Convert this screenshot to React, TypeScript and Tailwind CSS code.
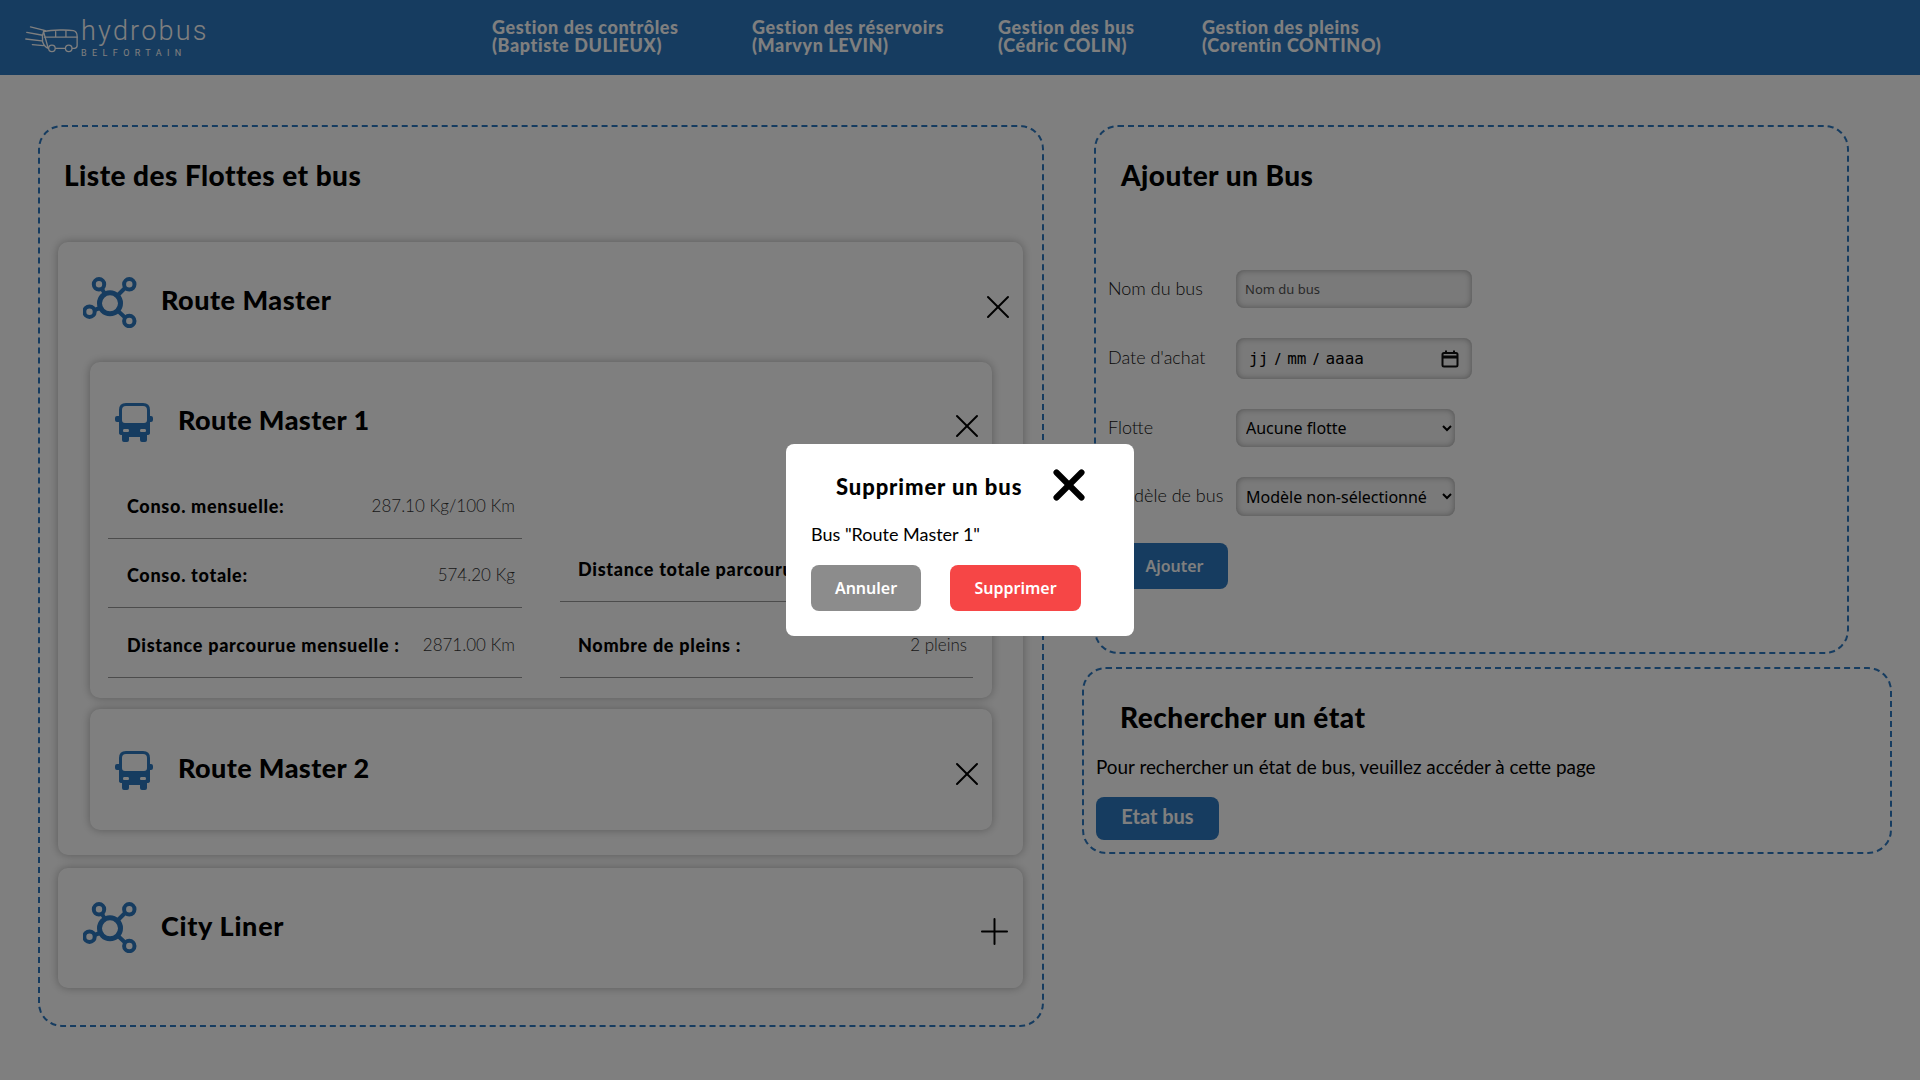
import React from 'react';
import { X, Plus } from 'lucide-react';

function NetworkIcon() {
  return (
    <svg viewBox="0 0 54 51" className="w-[54px] h-[51px] shrink-0" fill="none" stroke="#2c78c0">
      <circle cx="27" cy="26.3" r="10.5" strokeWidth="5" />
      <circle cx="16" cy="7.3" r="5.2" strokeWidth="4" />
      <circle cx="46.3" cy="7.3" r="5.2" strokeWidth="4" />
      <circle cx="6.5" cy="34.7" r="5.2" strokeWidth="4" />
      <circle cx="46.3" cy="44" r="5.2" strokeWidth="4" />
      <path d="M19 12 L22 17 M42 11 L34 19 M11.5 33 L17 31 M41.5 40 L34.5 33.5" strokeWidth="4" />
    </svg>
  );
}

function BusIcon() {
  return (
    <svg viewBox="0 0 38 39" className="w-[38px] h-[39px] shrink-0" fill="#2c78c0">
      <path
        fillRule="evenodd"
        d="M11 0 H28 Q35 0 35 7 V13 H36 Q38 13 38 15 V17 Q38 19 36 19 H35 V30 Q35 32 32 32 V37 Q32 39 30 39 H27 Q25 39 25 37 V34 H14 V37 Q14 39 12 39 H9 Q7 39 7 37 V32 Q4 32 4 30 V19 H2 Q0 19 0 17 V15 Q0 13 2 13 H4 V7 Q4 0 11 0 Z M11 3 Q7 3 7 7 V17 Q7 20 10 20 H29 Q32 20 32 17 V7 Q32 3 28 3 Z M9 26 Q8 26 8 27.5 Q8 29 9 29 H13 Q14 29 14 27.5 Q14 26 13 26 Z M26 26 Q25 26 25 27.5 Q25 29 26 29 H30 Q31 29 31 27.5 Q31 26 30 26 Z"
      />
    </svg>
  );
}

function LogoBus() {
  return (
    <svg viewBox="0 0 60 30" className="w-[56px] h-[28px] mt-[2px] shrink-0" fill="none" stroke="#ffffff" strokeWidth="1.4" strokeLinecap="round">
      <path d="M22 7 C32 5 48 5 54 6 Q58 7 58 12 V22 Q58 25 55 25 H53 M45 25 H35 M27 25 C24 24 22 21 21 18 Q20 12 22 7 Z" />
      <path d="M23 13 H58 M35 7 V13 M46 6 V13" />
      <circle cx="31" cy="25" r="3.5" />
      <circle cx="49" cy="25" r="3.5" />
      <path d="M8 2 L24 6 M4 8 L21 11 M3 15 L20 17 M10 21 L22 22" />
    </svg>
  );
}

function Stat({ label, value, className }: { label: string; value: string; className: string }) {
  return (
    <div className={`flex items-end justify-between border-b border-[#999999] pb-[20px] ${className}`}>
      <span className="text-[18px] leading-[24px] font-black tracking-[0.7px] text-black whitespace-nowrap">{label}</span>
      <span className="text-[17px] leading-[24px] font-light text-[#333333] whitespace-nowrap">{value}</span>
    </div>
  );
}

function Field({ label, children }: { label: string; children: React.ReactNode }) {
  return (
    <div className="flex items-center">
      <label className="-ml-[1px] -mt-[2px] w-[128px] shrink-0 text-[18px] font-light text-[#111111]">{label}</label>
      {children}
    </div>
  );
}

const fieldClass =
  "rounded-[8px] bg-[#f4f4f4] shadow-[inset_0_0_6px_rgba(0,0,0,0.35)] font-['Noto_Sans',sans-serif] text-black outline-none";

export default function App() {
  return (
    <div className="min-h-[1080px] bg-white font-['Lato',sans-serif]">
      <header className="flex items-center h-[75px] bg-[#2c78c0] text-white">
        <div className="w-[492px] flex items-center pl-[23px] gap-[2px]">
          <LogoBus />
          <div className="mt-[3px] font-['Roboto',sans-serif]">
            <div className="text-[27px] leading-[28px] font-light tracking-[2.2px]">hydrobus</div>
            <div className="text-[9px] leading-[16px] tracking-[5.4px]">BELFORTAIN</div>
          </div>
        </div>
        <nav className="flex -mt-[3px] text-[18px] leading-[18px] font-black tracking-[0.6px]">
          <a className="w-[260px]">Gestion des contrôles<br />(Baptiste DULIEUX)</a>
          <a className="w-[246px]">Gestion des réservoirs<br />(Marvyn LEVIN)</a>
          <a className="w-[204px]">Gestion des bus<br />(Cédric COLIN)</a>
          <a>Gestion des pleins<br />(Corentin CONTINO)</a>
        </nav>
      </header>

      <main className="flex items-start pl-[38px] pt-[50px] gap-[38px]">
        <section className="w-[1006px] h-[902px] border-2 border-dashed border-[#2c78c0] rounded-[24px] pl-[18px] pr-[19px]">
          <h2 className="h-[115px] pt-[29px] pl-[6px] text-[28px] leading-[38px] font-black tracking-[0.45px] text-black">Liste des Flottes et bus</h2>

          <div className="h-[613px] rounded-[10px] shadow-[0_0_10px_rgba(0,0,0,0.3)] bg-white">
            <div className="flex items-start h-[120px] pl-[25px] pr-[5px] pt-[35px]">
              <NetworkIcon />
              <h3 className="ml-[24px] mt-[5px] text-[27px] leading-[36px] font-black tracking-[0.5px] text-black">Route Master</h3>
              <X className="ml-auto mt-[10px] text-black" size={40} strokeWidth={1.2} />
            </div>

            <div className="ml-[32px] mr-[31px] h-[336px] rounded-[10px] shadow-[0_0_10px_rgba(0,0,0,0.3)] bg-white">
              <div className="flex items-start h-[107px] pl-[25px] pr-[5px] pt-[41px]">
                <BusIcon />
                <h3 className="ml-[25px] -mt-[1px] text-[27px] leading-[36px] font-black tracking-[0.4px] text-black">Route Master 1</h3>
                <X className="ml-auto mt-[3px] text-black" size={40} strokeWidth={1.2} />
              </div>
              <div className="grid grid-cols-[414px_413px] gap-x-[38px] pl-[18px]">
                <div className="flex flex-col">
                  <Stat label="Conso. mensuelle:" value="287.10 Kg/100 Km" className="h-[70px] pl-[19px] pr-[7px]" />
                  <Stat label="Conso. totale:" value="574.20 Kg" className="h-[69px] pl-[19px] pr-[7px]" />
                  <Stat label="Distance parcourue mensuelle :" value="2871.00 Km" className="h-[70px] pl-[19px] pr-[7px]" />
                </div>
                <div className="flex flex-col justify-end">
                  <Stat label="Distance totale parcourue :" value="5742.00 Km" className="h-[70px] pl-[18px] pr-[6px]" />
                  <Stat label="Nombre de pleins :" value="2 pleins" className="h-[76px] pl-[18px] pr-[6px]" />
                </div>
              </div>
            </div>

            <div className="ml-[32px] mr-[31px] mt-[11px] h-[121px] rounded-[10px] shadow-[0_0_10px_rgba(0,0,0,0.3)] bg-white flex items-start pl-[25px] pr-[5px] pt-[42px]">
              <BusIcon />
              <h3 className="ml-[25px] -mt-[1px] text-[27px] leading-[36px] font-black tracking-[0.4px] text-black">Route Master 2</h3>
              <X className="ml-auto mt-[3px] text-black" size={40} strokeWidth={1.2} />
            </div>
          </div>

          <div className="mt-[13px] h-[120px] rounded-[10px] shadow-[0_0_10px_rgba(0,0,0,0.3)] bg-white flex items-start pl-[25px] pr-[7px] pt-[34px]">
            <NetworkIcon />
            <h3 className="ml-[24px] mt-[6px] text-[27px] leading-[36px] font-black tracking-[0.7px] text-black">City Liner</h3>
            <Plus className="ml-auto mt-[8px] text-black" size={43} strokeWidth={1.1} />
          </div>
        </section>

        <div className="flex flex-col items-start">
          <section className="ml-[12px] w-[755px] h-[529px] border-2 border-dashed border-[#2c78c0] rounded-[24px] pl-[13px]">
            <h2 className="h-[143px] pt-[29px] pl-[12px] text-[28px] leading-[38px] font-black tracking-[0.45px] text-black">Ajouter un Bus</h2>
            <form className="flex flex-col gap-[30px] items-start">
              <Field label="Nom du bus">
                <input placeholder="Nom du bus" className={`${fieldClass} w-[236px] h-[38px] px-[9px] text-[13px] placeholder:text-[#555555]`} />
              </Field>
              <Field label="Date d'achat">
                <div className={`${fieldClass} w-[236px] h-[41px] flex items-center justify-between px-[13px]`}>
                  <span className="pt-[1px] text-[16px] flex gap-[6.5px] whitespace-nowrap">
                    <span className="font-['DejaVu_Sans_Mono',monospace]">jj</span>
                    <span>/</span>
                    <span className="font-['DejaVu_Sans_Mono',monospace]">mm</span>
                    <span>/</span>
                    <span className="font-['DejaVu_Sans_Mono',monospace]">aaaa</span>
                  </span>
                  <svg viewBox="0 0 18 18" className="w-[18px] h-[18px]" fill="none" stroke="#111111" strokeWidth="2">
                    <rect x="1.5" y="3" width="15" height="13.5" rx="1.5" />
                    <path d="M1.5 7 H16.5" strokeWidth="3" />
                    <path d="M5 0.5 V3 M13 0.5 V3" />
                  </svg>
                </div>
              </Field>
              <Field label="Flotte">
                <select className={`${fieldClass} w-[219px] h-[38px] text-[16px] pl-[6px] pr-[7px]`} defaultValue="">
                  <option value="">Aucune flotte</option>
                </select>
              </Field>
              <Field label="Modèle de bus">
                <select className={`${fieldClass} w-[219px] h-[39px] text-[16px] pl-[6px] pr-[7px]`} defaultValue="">
                  <option value="">Modèle non-sélectionné</option>
                </select>
              </Field>
              <button type="button" className="-mt-[3px] ml-[12px] w-[107px] h-[46px] rounded-[8px] bg-[#2c78c0] text-white text-[16px] font-semibold font-['Noto_Sans',sans-serif]">
                Ajouter
              </button>
            </form>
          </section>

          <section className="mt-[13px] w-[810px] h-[187px] border-2 border-dashed border-[#2c78c0] rounded-[24px] pl-[12px]">
            <h2 className="pt-[29px] pl-[24px] text-[28px] leading-[38px] font-black tracking-[0.5px] text-black">Rechercher un état</h2>
            <p className="mt-[18px] text-[18.9px] leading-[26px] text-black">Pour rechercher un état de bus, veuillez accéder à cette page</p>
            <button type="button" className="mt-[17px] w-[123px] h-[43px] pb-[6px] rounded-[8px] bg-[#2c78c0] text-white text-[20px] font-bold">
              Etat bus
            </button>
          </section>
        </div>
      </main>

      <div className="fixed inset-0 bg-black/50 flex items-center justify-center">
        <div className="w-[348px] h-[192px] rounded-[8px] bg-white px-[25px]">
          <div className="flex items-start h-[69px] pt-[21px]">
            <h2 className="ml-[25px] w-[217px] shrink-0 text-[22px] leading-[44px] font-black tracking-[0.9px] text-black">Supprimer un bus</h2>
            <X className="text-black -ml-[9.5px] -mt-[5.5px] shrink-0" size={50} strokeWidth={2.9} />
          </div>
          <p className="mt-[8px] text-[18px] leading-[26px] text-black">Bus "Route Master 1"</p>
          <div className="flex gap-[29px] mt-[18px]">
            <button type="button" className="w-[110px] h-[46px] rounded-[8px] bg-[#8c8c8c] text-white text-[16px] font-semibold font-['Noto_Sans',sans-serif]">Annuler</button>
            <button type="button" className="w-[131px] h-[46px] rounded-[8px] bg-[#f64646] text-white text-[16px] font-semibold font-['Noto_Sans',sans-serif]">Supprimer</button>
          </div>
        </div>
      </div>
    </div>
  );
}
